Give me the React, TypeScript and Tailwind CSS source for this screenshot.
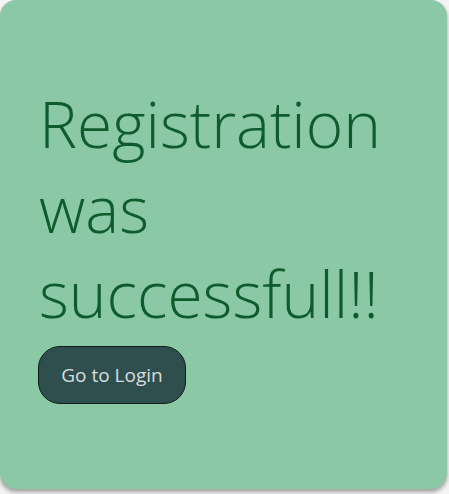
import React from "react";

export default function App() {
  return (
    <div className="w-[449px] h-[494px] bg-[#f4f4f4]">
      <div className="w-[447px] h-[489px] rounded-[16px] bg-[#8bc8a5] shadow-[0_3px_4px_rgba(0,0,0,0.35)] pl-[39px] pt-[81px] flex flex-col items-start">
        <h1
          className="text-[64px] leading-[85px] text-[#0e5c2d] font-light"
          style={{ fontFamily: '"Open Sans", "Noto Sans", sans-serif' }}
        >
          Registration
          <br />
          was
          <br />
          successfull!!
        </h1>
        <button
          className="mt-[10px] -ml-[1px] w-[148px] h-[58px] rounded-[22px] bg-[#2f4f4f] border border-[#101a1a] text-[#d9dddd] text-[19px]"
          style={{ fontFamily: '"Open Sans", "Noto Sans", sans-serif' }}
        >
          Go to Login
        </button>
      </div>
    </div>
  );
}
